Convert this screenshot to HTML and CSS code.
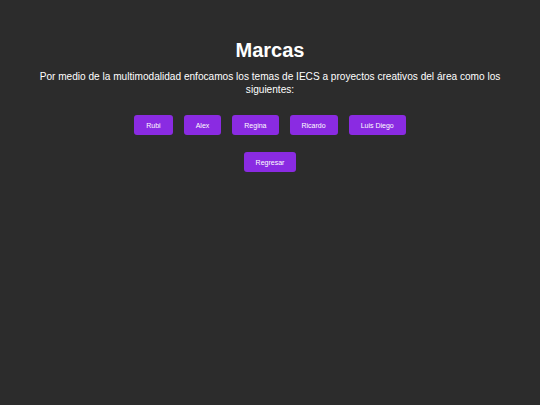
FILE: index.html
```html
<!DOCTYPE html>
<html lang="es">
<head>
<meta charset="utf-8">
<title>Marcas</title>
<link rel="stylesheet" href="styles.css">
</head>
<body>
<main class="page">
  <h1 class="title">Marcas</h1>
  <p class="intro">Por medio de la multimodalidad enfocamos los temas de IECS a proyectos creativos del área como los siguientes:</p>
  <nav class="people">
    <button class="btn">Rubi</button>
    <button class="btn">Alex</button>
    <button class="btn">Regina</button>
    <button class="btn">Ricardo</button>
    <button class="btn">Luis Diego</button>
  </nav>
  <div class="back">
    <button class="btn">Regresar</button>
  </div>
</main>
</body>
</html>
```
FILE: styles.css
```css
html, body {
  margin: 0;
  padding: 0;
  background: #2c2c2c;
  color: #ffffff;
  font-family: "Liberation Sans", Arial, sans-serif;
}
.page {
  display: flex;
  flex-direction: column;
  align-items: center;
  padding: 38px 20px 0;
  text-align: center;
}
.title {
  margin: 0;
  font-size: 20px;
  font-weight: bold;
  line-height: 24px;
}
.intro {
  margin: 8px 0 0;
  font-size: 10.1px;
  line-height: 13px;
}
.people {
  display: flex;
  gap: 11px;
  margin-top: 19px;
}
.back {
  display: flex;
  margin-top: 17px;
}
.btn {
  display: block;
  background: #8a2be2;
  color: #ffffff;
  border: none;
  border-radius: 3px;
  font-family: "Liberation Sans", Arial, sans-serif;
  font-size: 7px;
  height: 20px;
  padding: 0 12px;
  cursor: pointer;
}
```
